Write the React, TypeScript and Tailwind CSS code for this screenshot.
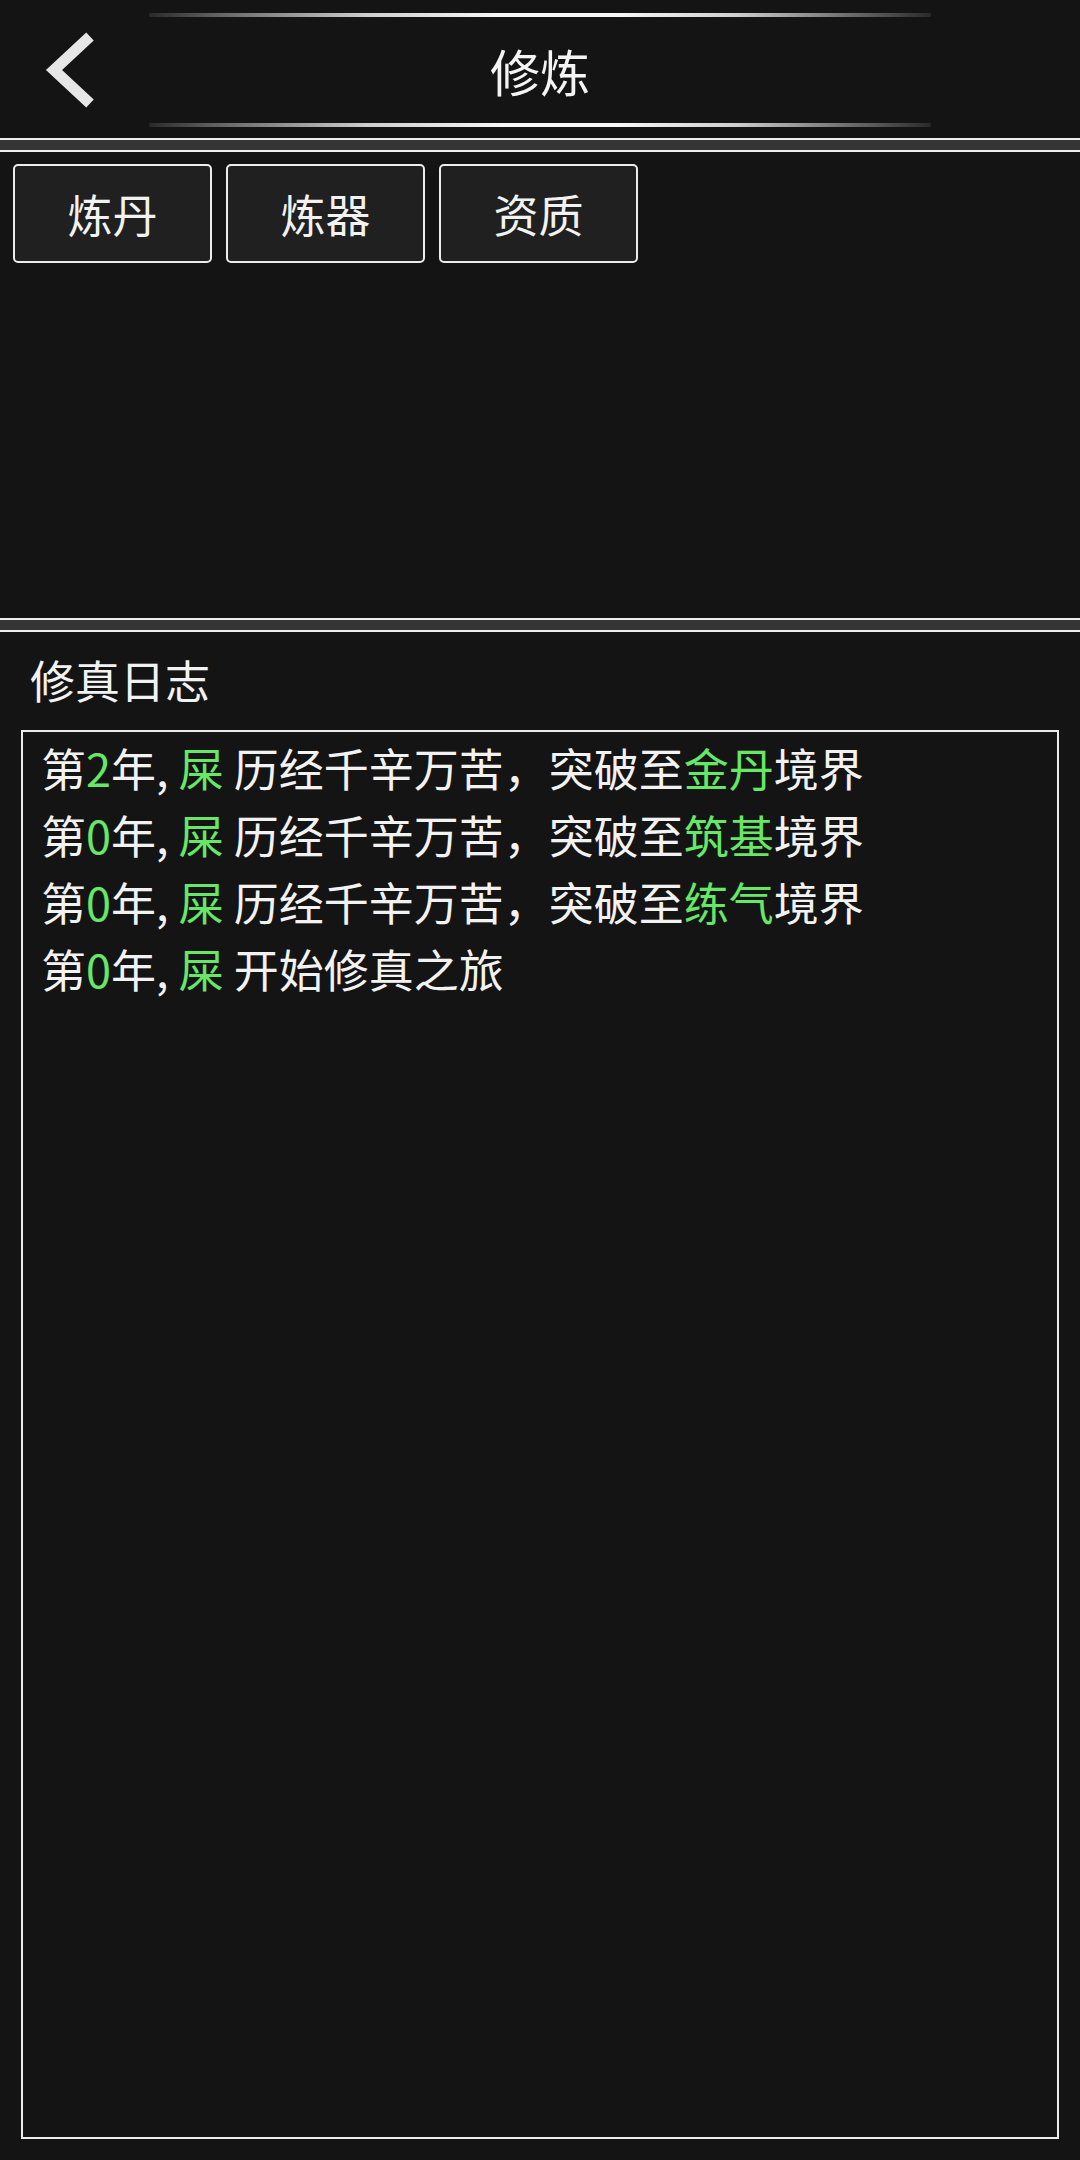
import React from "react";

const FONT = { fontFamily: '"Noto Sans CJK SC", "Noto Sans", sans-serif' };

function Separator() {
  return (
    <div className="flex flex-col shrink-0">
      <div className="h-[2px] bg-[#efefef]" />
      <div className="h-[10px] bg-[#353535]" />
      <div className="h-[2px] bg-[#efefef]" />
    </div>
  );
}

function GlowLine() {
  return (
    <div className="w-[782px] h-[4px] rounded-full bg-[linear-gradient(to_right,#2a2a2a_0%,#6a6a6a_10%,#cfcfcf_28%,#f7f7f7_45%,#f7f7f7_60%,#cfcfcf_75%,#6a6a6a_90%,#2a2a2a_100%)]" />
  );
}

const G = ({ children }: { children: React.ReactNode }) => (
  <span className="text-[#66e766]">{children}</span>
);

export default function App() {
  const lines: React.ReactNode[] = [
    <>
      第<G>2</G>年, <G>屎</G> 历经千辛万苦，突破至<G>金丹</G>境界
    </>,
    <>
      第<G>0</G>年, <G>屎</G> 历经千辛万苦，突破至<G>筑基</G>境界
    </>,
    <>
      第<G>0</G>年, <G>屎</G> 历经千辛万苦，突破至<G>练气</G>境界
    </>,
    <>
      第<G>0</G>年, <G>屎</G> 开始修真之旅
    </>,
  ];

  return (
    <div
      className="w-[1080px] h-[2160px] bg-[#141414] text-[#f2f2f2] flex flex-col overflow-hidden"
      style={FONT}
    >
      {/* Header */}
      <div className="relative h-[138px] shrink-0 flex flex-col items-center pt-[13px] pb-[11px]">
        <GlowLine />
        <div className="flex-1 flex items-center justify-center text-[50px] leading-none text-[#f4f4f4]">
          修炼
        </div>
        <GlowLine />
        <svg
          className="absolute left-0 top-0"
          width="140"
          height="138"
          viewBox="0 0 140 138"
        >
          <path
            d="M90 36.5 L54 70 L90 103.5"
            fill="none"
            stroke="#e6e6e6"
            strokeWidth="11"
            strokeLinejoin="miter"
            strokeLinecap="butt"
          />
        </svg>
      </div>

      <Separator />

      {/* Tabs panel */}
      <div className="h-[466px] shrink-0 pt-[12px] pl-[13px] flex items-start gap-[14px]">
        {["炼丹", "炼器", "资质"].map((t) => (
          <div
            key={t}
            className="w-[199px] h-[99px] rounded-[5px] border-2 border-[#ececec] bg-[#202020] flex items-center justify-center text-[45px] leading-none"
          >
            {t}
          </div>
        ))}
      </div>

      <Separator />

      {/* Log panel */}
      <div className="flex-1 flex flex-col min-h-0">
        <div className="h-[98px] shrink-0 flex items-center pl-[30px] pb-[3px] text-[45px] leading-none">
          修真日志
        </div>
        <div className="flex-1 mx-[21px] mb-[21px] border-2 border-[#ececec] pt-[2px] pl-[18px]">
          {lines.map((l, i) => (
            <div key={i} className="text-[45px] leading-[67px] whitespace-pre">
              {l}
            </div>
          ))}
        </div>
      </div>
    </div>
  );
}
